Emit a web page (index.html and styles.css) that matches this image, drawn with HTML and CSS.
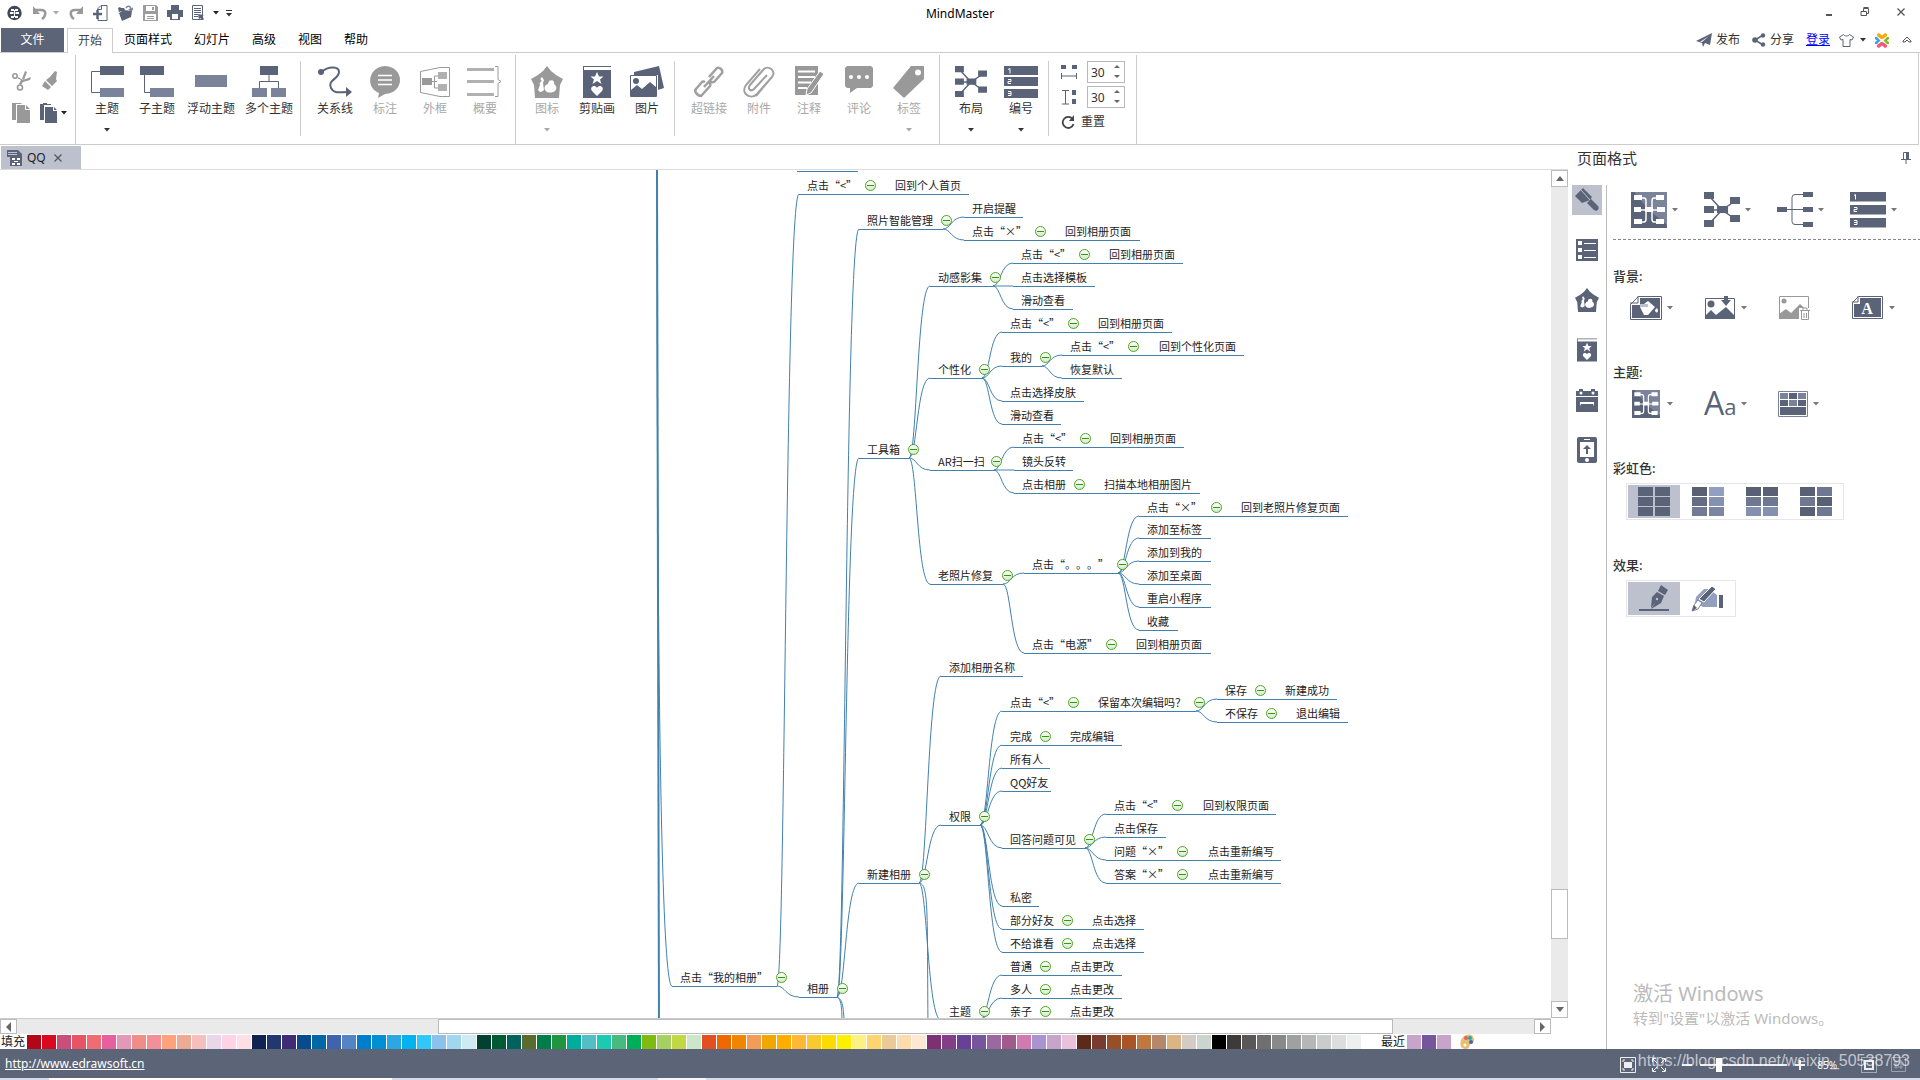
FILE: index.html
```
<!DOCTYPE html>
<html lang="zh-CN">

<head>
    <meta charset="utf-8" />
    <title>MindMaster</title>
    <link rel="stylesheet" href="styles.css">
</head>

<body>
    <!-- shared symbols -->
    <svg class="defs" aria-hidden="true">
        <symbol id="i-arrow" viewBox="0 0 6 4"><path d="M0 0h6L3 3.5z" fill="currentColor" /></symbol>
        <symbol id="i-pentagon" viewBox="0 0 32 32">
            <path d="M16 0l4 5 5 4 7 4-3 6-1 13H4L3 19 0 13l7-4 5-4z" fill="currentColor" />
            <path d="M11 11c-2 1-2 3 0 4-2 1-3 2-2 4l-2 5c2 3 4 2 6 0l-1-7 1-3z" fill="#fff" />
            <path d="M18 15c3-2 6 0 5 3 3 2 3 5 1 7-3 2-8 2-9 0-3-3-1-6 2-7z" fill="#fff" />
        </symbol>
        <symbol id="i-clip" viewBox="0 0 28 32">
            <path d="M0 0h28v1H1v3h27v28H0z" fill="currentColor" />
            <path d="M14 6l2 4.500h4.500l-3.500 3 1.500 4.500-4.500-3-4.500 3 1.500-4.500-3.500-3H12zM14 30l-5-5c-3-4 3-7 5-3 2-4 8-1 5 3z" fill="#fff" />
        </symbol>
        <symbol id="i-layout" viewBox="0 0 36 36">
            <path d="M5 4l13 14L31 9M5 18h13M5 32l13-14 13 9" fill="none" stroke="currentColor" stroke-width="1.500" />
            <path d="M0 0h10v7H0zM0 14h10v7H0zM0 28h10v7H0zM13 14h11v7H13zM26 5h10v7H26zM26 23h10v7H26z" fill="currentColor" />
        </symbol>
        <symbol id="i-number" viewBox="0 0 36 36">
            <path d="M0 0h36v9.500H0zM0 13h36v9.500H0zM0 26h36v9.500H0z" fill="currentColor" />
            <path d="M4 3.500l1.500-1v5M4 15.500h3v2H4v2h3M4 28.500h3v4H4M4 30.500h3" fill="none" stroke="#fff" stroke-width="1" />
        </symbol>
        <symbol id="i-theme" viewBox="0 0 36 36">
            <path d="M0 0h36v36H0z" fill="#5a6377" />
            <path d="M3 0h33v33L18 18z" fill="#7b839b" />
            <path d="M10 6h3q2 0 2 3v18q0 3-2 3h-3M26 6h-3q-2 0-2 3v18q0 3 2 3h3M8 18h20" fill="none" stroke="#fff" stroke-width="1.500" />
            <path d="M3 3h8v5H3zM3 15h7v5H3zM3 27h8v5H3zM25 3h8v5h-8zM26 15h8v5h-8zM25 27h8v5h-8zM14 15h8v5h-8z" fill="#fff" />
        </symbol>
    </svg>

    <header class="titlebar">
        <div class="quick">
            <svg class="q-logo" width="15" height="16" viewBox="0 0 15 16"><circle cx="7.500" cy="8" r="7.200" fill="#3f475a" /><path d="M4 4h3v2H4zM8 4h3v2H8zM3 7h3v2H3zM9 7h3v2H9zM4 11h3v2H4zM8 11h3v2H8z" fill="#fff" /><path d="M7.500 5v7M6 8h3" stroke="#fff" fill="none" /></svg>
            <button class="q-btn q-undo" aria-label="撤销"><svg width="14" height="14" viewBox="0 0 14 14"><path d="M2 4h6c6 0 5 6 1 9" fill="none" stroke="#999" stroke-width="2.500" /><path d="M0 0v8h7z" fill="#999" /></svg></button>
            <button class="q-btn q-mini light" aria-label="撤销列表"><svg width="6" height="4"><use href="#i-arrow" /></svg></button>
            <button class="q-btn q-redo" aria-label="重做"><svg width="14" height="14" viewBox="0 0 14 14"><path d="M12 4H6C0 4 1 10 5 13" fill="none" stroke="#999" stroke-width="2.500" /><path d="M14 0v8H7z" fill="#999" /></svg></button>
            <button class="q-btn" aria-label="新建"><svg width="15" height="16" viewBox="0 0 15 16"><path d="M4.500 6V4l3.500-3.500h6v15h-9V13M8.500 1v3.500H5" fill="none" stroke="#5a6377" /><path d="M0 9h9M4.500 5v9" stroke="#5a6377" stroke-width="2.500" /></svg></button>
            <button class="q-btn" aria-label="打开"><svg width="15" height="16" viewBox="0 0 15 16"><path d="M0 3l2-1 1 1h3l1 2-6 2zM1 8l5-3 8 1-1 6-9 4z" fill="#5a6377" /><path d="M8 3c2-3 5-2 5 2M11 4l2 2 2-3" fill="none" stroke="#7b839b" stroke-width="1.500" /></svg></button>
            <button class="q-btn" aria-label="保存"><svg width="15" height="16" viewBox="0 0 15 16"><path d="M0 0h13l2 2v14H0z" fill="#9c9c9c" /><path d="M3 1h9v5H3zM2 9h11v6H2z" fill="#fff" /><path d="M9 2h2v3H9zM4 11h7v1H4zM4 13h7v1H4z" fill="#9c9c9c" /></svg></button>
            <button class="q-btn" aria-label="打印"><svg width="16" height="16" viewBox="0 0 16 16"><path d="M4 0h8v5h4v7h-3v3H3v-3H0V5h4z" fill="#5a6377" /><path d="M5 9h6v5H5z" fill="#fff" /></svg></button>
            <button class="q-btn q-page" aria-label="导出"><svg width="12" height="16" viewBox="0 0 12 16"><path d="M.5.500h10v14H.5zM2 3.500h7M2 5.500h7M2 7.500h7M2 9.500h4M2 11.500h4" fill="none" stroke="#5a6377" /><path d="M6 9l6 1-2 1 2 3-1 1-3-2-1 2z" fill="#5a6377" /></svg></button>
            <button class="q-btn q-mini" aria-label="导出列表"><svg width="6" height="4"><use href="#i-arrow" /></svg></button>
            <button class="q-btn q-mini q-more" aria-label="自定义"><svg width="6" height="7" viewBox="0 0 6 7"><path d="M0 0h6v1H0zM0 3h6L3 6.500z" fill="#333" /></svg></button>
        </div>
        <h1 class="app-title">MindMaster</h1>
        <div class="win-ctl">
            <button aria-label="最小化"><svg width="10" height="12"><path d="M2 8h6v2H2z" fill="#555" /></svg></button>
            <button aria-label="还原"><svg width="10" height="12" viewBox="0 0 10 12"><path d="M3.500 5V2.500h5v5H7M3.500 1.500h5" fill="none" stroke="#555" /><path d="M1 5.500h5.500v4H1z" fill="none" stroke="#555" /></svg></button>
            <button aria-label="关闭"><svg width="10" height="12"><path d="M1.500 2.500l7 7M8.500 2.500l-7 7" stroke="#555" stroke-width="1.300" /></svg></button>
        </div>
    </header>

    <nav class="tabs">
        <button class="tab-file">文件</button>
        <button class="tab active">开始</button>
        <button class="tab">页面样式</button>
        <button class="tab">幻灯片</button>
        <button class="tab">高级</button>
        <button class="tab">视图</button>
        <button class="tab">帮助</button>
        <div class="account">
            <button class="acc-btn"><svg width="16" height="14" viewBox="0 0 16 14"><path d="M0 8L16 0l-2 12-5-2-2 4-1-4zM6 9l7-6-9 6z" fill="#5a6377" /></svg>发布</button>
            <button class="acc-btn"><svg width="14" height="14" viewBox="0 0 14 14"><path d="M11 2L3 7l8 5" fill="none" stroke="#5a6377" stroke-width="1.500" /><circle cx="11" cy="2.500" r="2.200" fill="#5a6377" /><circle cx="3" cy="7" r="2.800" fill="#5a6377" /><circle cx="11" cy="11.500" r="2.200" fill="#5a6377" /></svg>分享</button>
            <a class="login" href="#">登录</a>
            <button class="acc-icon skin" aria-label="皮肤"><svg width="15" height="13" viewBox="0 0 15 13"><path d="M4.500.500c1 2 5 2 6 0l4 2.500-1.500 3-2-.5v7H4v-7L2 6 .5 3z" fill="none" stroke="#5a6377" /></svg><svg width="6" height="4"><use href="#i-arrow" /></svg></button>
            <svg class="flower" width="16" height="15" viewBox="0 0 16 15"><path d="M3 3V1l2-1 3 2.500L11 0l2 1v2L9 6H7z" fill="#f8a912" /><path d="M13 4h2v2l-2 1.500L15 9v2h-2L9.500 7.500z" fill="#85bb24" /><path d="M3 12v2l2 1 3-2.500L11 15l2-1v-2L9 9H7z" fill="#f4587c" /><path d="M3 4H1v2l2 1.500L1 9v2h2l3.500-3.500z" fill="#3ba4df" /></svg>
            <button class="acc-icon" aria-label="折叠功能区"><svg width="10" height="8" viewBox="0 0 10 8"><path d="M1 5l4-4 4 4v1H7L5 4 3 6H1z" fill="none" stroke="#555" /></svg></button>
        </div>
    </nav>

    <section class="ribbon">
        <div class="group clipboard">
            <button class="mini" aria-label="剪切"><svg width="20" height="20" viewBox="0 0 20 20"><path d="M6 6l5 3 8-3-1 3-7 2-2 3-2-1 2-4-4-2zM10 8l3-8 2 1-3 8z" fill="#999" /><circle cx="3" cy="5" r="2.200" fill="none" stroke="#999" stroke-width="1.600" /><circle cx="8" cy="16.500" r="2.500" fill="none" stroke="#999" stroke-width="1.600" /></svg></button>
            <button class="mini" aria-label="格式刷"><svg width="16" height="20" viewBox="0 0 16 20"><path d="M13 0l2 1-1 7 1 2-5 5-6-6 4-3zM3 10l6 6-3 3-6-4z" fill="#999" /></svg></button>
            <button class="mini" aria-label="复制"><svg width="18" height="20" viewBox="0 0 18 20"><path d="M0 0h9l1 1H4v16H0zM5 2h8v5h5v13H5zM14 2l4 4h-4z" fill="#999" /></svg></button>
            <button class="mini paste" aria-label="粘贴"><svg width="18" height="20" viewBox="0 0 18 20"><path d="M0 1h3V0h4v1h4v1H4v15H0zM5 4h8v4h4v12H5zM14 4l3 3h-3z" fill="#5a6377" /></svg><svg width="6" height="4"><use href="#i-arrow" /></svg></button>
        </div>

        <div class="group">
            <button class="tool"><svg width="34" height="32" viewBox="0 0 34 32"><path d="M10 5.500H1.500v21H10" fill="none" stroke="#5a6377" /><path d="M10 0h24v9H10z" fill="#5a6377" /><path d="M10 22h24v9H10z" fill="#7b839b" /></svg>主题<svg class="drop" width="6" height="4"><use href="#i-arrow" /></svg></button>
            <button class="tool"><svg width="34" height="32" viewBox="0 0 34 32"><path d="M4.500 9v17.500H10" fill="none" stroke="#5a6377" /><path d="M0 0h24v9H0z" fill="#5a6377" /><path d="M10 22h24v9H10z" fill="#7b839b" /></svg>子主题</button>
            <button class="tool wide"><svg width="34" height="32" viewBox="0 0 34 32"><path d="M1 9h32v12H1z" fill="#7b839b" /></svg>浮动主题</button>
            <button class="tool wide"><svg width="34" height="32" viewBox="0 0 34 32"><path d="M17 9v7M7.500 22v-6.500h19V22" fill="none" stroke="#5a6377" /><path d="M8 0h18v9H8z" fill="#5a6377" /><path d="M0 22h15v9H0zM19 22h15v9H19z" fill="#7b839b" /></svg>多个主题</button>
            <i class="sep"></i>
            <button class="tool"><svg width="34" height="32" viewBox="0 0 34 32"><circle cx="3" cy="6" r="3" fill="#5a6377" /><path d="M3 6C12-1 21 1 21 6c0 7-12 8-8 16 3 6 8 4 17 4" fill="none" stroke="#5a6377" stroke-width="2" /><path d="M28 21l6 5-6 5z" fill="#5a6377" /></svg>关系线</button>
            <button class="tool off"><svg width="30" height="32" viewBox="0 0 30 32"><path d="M15 0c20 1 20 27 0 28l-7 4 1-5C-5 22-2 1 15 0z" fill="#999" /><path d="M8 9.500h14M8 14h14M8 18.500h14" stroke="#fff" stroke-width="1.500" /></svg>标注</button>
            <button class="tool off"><svg width="30" height="32" viewBox="0 0 30 32"><path d="M.5 5.500L20 1.500h9.500v29H20L.5 26.500zM12 15.500h5M18 10h-3.500v12H18" fill="none" stroke="#999" /><path d="M2 12h10v7H2z" fill="#999" /><path d="M18 6h9v7h-9zM18 18h9v7h-9z" fill="#b0b0b0" /></svg>外框</button>
            <button class="tool off"><svg width="36" height="32" viewBox="0 0 36 32"><path d="M0 2h27v3H0zM0 14h27v3H0zM0 27h27v3H0z" fill="#b0b0b0" /><path d="M28 .5h3v13l3 2-3 2v13h-3" fill="none" stroke="#999" /></svg>概要</button>
        </div>

        <div class="group">
            <button class="tool off"><svg class="gray" width="32" height="32"><use href="#i-pentagon" /></svg>图标<svg class="drop" width="6" height="4"><use href="#i-arrow" /></svg></button>
            <button class="tool"><svg class="ink" width="28" height="32"><use href="#i-clip" /></svg>剪贴画</button>
            <button class="tool"><svg width="34" height="32" viewBox="0 0 34 32"><path d="M4 6L29 0l5 22-6 2V9H4z" fill="#5a6377" /><path d="M.5 9.500h26v21H.5z" fill="#fff" stroke="#5a6377" /><path d="M1 24l6-5 5 4 8-7 6 5v10H1z" fill="#5a6377" /><circle cx="6" cy="15" r="3" fill="#5a6377" /></svg>图片</button>
            <i class="sep"></i>
            <button class="tool off"><svg width="30" height="32" viewBox="0 0 30 32"><g fill="none" stroke="#a0a0a0" stroke-width="2.500"><path d="M15 11L23 2q2-1 4 1t1 4l-8 9q-2 1-4-1M11 16q-2-1-3 0l-6 7q-2 2 1 5t5 1l8-9q1-2-1-4M10 21l10-11" /></g></svg>超链接</button>
            <button class="tool off"><svg width="32" height="32" viewBox="0 0 32 32"><path d="M24 9L11 23c-3 3-7 0-4-4L20 4c5-6 14 1 9 7L14 28c-6 6-17 0-11-9L17 3M28 12L13 30" fill="none" stroke="#a0a0a0" stroke-width="2" /></svg>附件</button>
            <button class="tool off"><svg width="28" height="32" viewBox="0 0 28 32"><path d="M0 0h23v29H0z" fill="#999" /><path d="M3 5.500h17M3 11h17M3 16.500h13M3 22h9" stroke="#fff" stroke-width="2" /><path d="M25 5l4 3-13 19-5 2 1-6z" fill="#999" stroke="#fff" /></svg>注释</button>
            <button class="tool off"><svg width="28" height="32" viewBox="0 0 28 32"><path d="M2 0h24l2 2v18l-2 2H12l-7 5v-5H2l-2-2V2z" fill="#999" /><circle cx="6" cy="11" r="2" fill="#fff" /><circle cx="14" cy="11" r="2" fill="#fff" /><circle cx="22" cy="11" r="2" fill="#fff" /></svg>评论</button>
            <button class="tool off"><svg width="32" height="32" viewBox="0 0 32 32"><path d="M18 0h13v13L11 32 0 22z" fill="#999" /><circle cx="25" cy="6.500" r="3" fill="#fff" /></svg>标签<svg class="drop" width="6" height="4"><use href="#i-arrow" /></svg></button>
        </div>

        <div class="group">
            <button class="tool"><svg class="ink" width="32" height="32"><use href="#i-layout" /></svg>布局<svg class="drop" width="6" height="4"><use href="#i-arrow" /></svg></button>
            <button class="tool"><svg class="ink" width="34" height="32" viewBox="0 0 34 32"><path d="M0 0h34v9H0zM0 11h34v9H0zM0 23h34v9H0z" fill="currentColor" /><path d="M4 3.500l2-1v5M4 13.500h3v2H4v2h3M4 25.500h3v4H4M4 27.500h3" fill="none" stroke="#fff" /></svg>编号<svg class="drop" width="6" height="4"><use href="#i-arrow" /></svg></button>
            <i class="sep"></i>
            <div class="spacing">
                <label class="spin">
                    <svg width="16" height="15" viewBox="0 0 16 15"><path d="M0 0h5v4H0zM11 0h5v4h-5z" fill="#5a6377" /><path d="M.5 8v6M15.500 8v6M1 11h14" fill="none" stroke="#5a6377" /></svg>
                    <span class="spin-box"><input type="text" value="30" aria-label="水平间距"><svg width="6" height="14" viewBox="0 0 6 14"><path d="M0 3l3-3 3 3zM0 10h6l-3 3z" fill="#666" /></svg></span>
                </label>
                <label class="spin">
                    <svg width="16" height="15" viewBox="0 0 16 15"><path d="M11 0h4v5h-4zM11 9h4v5h-4z" fill="#5a6377" /><path d="M1 .5h7M1 14h7M4.500 1v13" fill="none" stroke="#5a6377" /></svg>
                    <span class="spin-box"><input type="text" value="30" aria-label="垂直间距"><svg width="6" height="14" viewBox="0 0 6 14"><path d="M0 3l3-3 3 3zM0 10h6l-3 3z" fill="#666" /></svg></span>
                </label>
                <button class="reset"><svg width="14" height="14" viewBox="0 0 14 14"><path d="M11.500 4A5.500 5.500 0 1 0 12.500 9" fill="none" stroke="#444" stroke-width="1.800" /><path d="M13 0v6H8z" fill="#444" /></svg>重置</button>
            </div>
        </div>
    </section>

    <main class="work">
        <div class="editor">
            <div class="doc-tabs">
                <div class="doc-tab">
                    <svg width="16" height="16" viewBox="0 0 16 16"><path d="M0 0h11l4 4v12H3V7H0z" fill="#5a6377" /><path d="M1 2.500h9M1 4.500h9" stroke="#bcc1cd" /><path d="M5 8h3v2H5zM10 8h3v2h-3zM7 11h4v1H7zM5 13h3v2H5zM10 13h3v2h-3z" fill="#fff" /></svg>
                    <span>QQ</span>
                    <button aria-label="关闭文档"><svg width="8" height="8"><path d="M.5.500l7 7M7.500.500l-7 7" stroke="#555" stroke-width="1.200" /></svg></button>
                </div>
            </div>
            <div class="view">
                <div class="canvas" id="map"></div>
                <div class="vscroll">
                    <button aria-label="向上"><svg width="8" height="5"><path d="M0 5h8L4 0z" fill="#666" /></svg></button>
                    <span class="v-before"></span><span class="thumb"></span><span class="v-after"></span>
                    <button aria-label="向下"><svg width="8" height="5"><path d="M0 0h8L4 5z" fill="#666" /></svg></button>
                </div>
            </div>
            <div class="hscroll">
                <button aria-label="向左"><svg width="5" height="10"><path d="M5 0v10L0 5z" fill="#666" /></svg></button>
                <span class="h-before"></span><span class="thumb"></span><span class="h-after"></span>
                <button aria-label="向右"><svg width="5" height="10"><path d="M0 0v10l5-5z" fill="#666" /></svg></button>
            </div>
            <div class="palette">
                <span>填充</span>
                <div class="swatches" id="fill"></div>
                <span class="recent">最近</span>
                <div class="swatches" id="recent"></div>
                <button class="more-colors" aria-label="更多颜色"><svg width="14" height="15" viewBox="0 0 14 15"><path d="M6 1c9-3 10 8 5 9-2 0-1 5-5 5-8 0-7-11 0-14z" fill="#e9bd72" /><circle cx="6" cy="4" r="2" fill="#e8615c" /><circle cx="10" cy="4" r="2" fill="#27a6b5" /><circle cx="11" cy="8" r="2" fill="#3b67b8" /><circle cx="5" cy="11" r="1.500" fill="#fff" /></svg></button>
            </div>
        </div>

        <aside class="panel">
            <div class="panel-head">
                <h2>页面格式</h2>
                <button aria-label="固定"><svg width="10" height="12" viewBox="0 0 10 12"><path d="M2.500.500h5v7h-5zM0 7.500h10M5 8v4" fill="none" stroke="#5a6377" /><path d="M5 0h3v7H5z" fill="#5a6377" /></svg></button>
            </div>
            <div class="panel-main">
                <div class="rail">
                    <button class="on" aria-label="页面格式"><svg width="24" height="24" viewBox="0 0 24 24"><path d="M8 0l9 9-2 3-8 3-7-7zM16 11l7 7c2 3-1 6-4 4l-7-7z" fill="#5a6377" /><path d="M6 2l9 10" stroke="#bcc1cd" /></svg></button>
                    <button aria-label="大纲"><svg width="22" height="22" viewBox="0 0 22 22"><path d="M0 0h22v22H0z" fill="#5a6377" /><path d="M2 2h4v4H2zM2 9h4v4H2zM2 16h4v4H2zM8 4h12v1H8zM8 11h12v1H8zM8 18h12v1H8z" fill="#fff" /></svg></button>
                    <button aria-label="图标"><svg class="ink" width="24" height="24"><use href="#i-pentagon" /></svg></button>
                    <button aria-label="剪贴画"><svg class="ink" width="20" height="24" viewBox="0 0 20 24"><use href="#i-clip" width="20" height="24" /></svg></button>
                    <button aria-label="任务"><svg width="22" height="24" viewBox="0 0 22 24"><path d="M0 3h3V1h4v2h8V1h4v2h3v5H0zM0 9h22v15H0z" fill="#5a6377" /><circle cx="5" cy="5" r="1.500" fill="#fff" /><circle cx="17" cy="5" r="1.500" fill="#fff" /><path d="M4 14h14v4l-1-2H5l-1 2z" fill="#fff" /></svg></button>
                    <button aria-label="手机"><svg width="20" height="26" viewBox="0 0 20 26"><rect width="20" height="26" rx="2" fill="#5a6377" /><path d="M7 2h6v1H7zM3 5h14v15H3z" fill="#fff" /><circle cx="10" cy="23" r="2" fill="#fff" /><path d="M10 8l4 4h-3v5H9v-5H6z" fill="#5a6377" /></svg></button>
                </div>
                <div class="props">
                    <div class="row row-main">
                        <button class="pick"><svg width="36" height="36"><use href="#i-theme" /></svg><svg width="6" height="4"><use href="#i-arrow" /></svg></button>
                        <button class="pick"><svg class="ink" width="36" height="36"><use href="#i-layout" /></svg><svg width="6" height="4"><use href="#i-arrow" /></svg></button>
                        <button class="pick"><svg width="36" height="36" viewBox="0 0 36 36"><path d="M0 17.500h36M27 2.500H18q-3 0-3 3v24q0 3 3 3h9" fill="none" stroke="#5a6377" /><path d="M0 15h10v5H0zM26 0h10v5H26zM26 15h10v5H26zM26 30h10v5H26z" fill="#5a6377" /></svg><svg width="6" height="4"><use href="#i-arrow" /></svg></button>
                        <button class="pick"><svg class="ink" width="36" height="36"><use href="#i-number" /></svg><svg width="6" height="4"><use href="#i-arrow" /></svg></button>
                    </div>

                    <h3>背景:</h3>
                    <div class="row">
                        <button class="pick"><svg width="32" height="24" viewBox="0 0 32 24"><path d="M8.500.500h23v23H.5v-15zM8 0v7H0" fill="#fff" stroke="#5a6377" /><path d="M10 2h20v20H2V9h8z" fill="#5a6377" /><path d="M10 11l8-6 7 6-7 8h-4zM27 12c3 5-2 6-2 2z" fill="#fff" /><path d="M10 8h8v3h-8z" fill="#bcc1cd" /></svg><svg width="6" height="4"><use href="#i-arrow" /></svg></button>
                        <button class="pick"><svg width="32" height="24" viewBox="0 0 32 24"><path d="M1.500 2.500h29v20h-29z" fill="#fff" stroke="#5a6377" /><circle cx="7" cy="8" r="3.500" fill="#5a6377" /><path d="M1 20l6-6 5 5 10-8 9 9v3H1zM20 0h4v4h3l-5 6-5-6h3z" fill="#5a6377" /></svg><svg width="6" height="4"><use href="#i-arrow" /></svg></button>
                        <button class="pick"><svg width="32" height="24" viewBox="0 0 32 24"><path d="M1.500.500h29v22h-29z" fill="#fff" stroke="#999" /><circle cx="6" cy="5" r="2.500" fill="#999" /><path d="M1 18l7-5 5 4 9-9 9 8v7H1z" fill="#999" /><path d="M21 12h11v12H21z" fill="#fff" /><path d="M22 14.500h10M25 14v-2h4v2M23.500 15v8.500h7V15M26 17v5M28.500 17v5" fill="none" stroke="#999" /></svg></button>
                        <button class="pick"><svg width="32" height="24" viewBox="0 0 32 24"><path d="M6.500.500h24v22H.5v-16zM6 0v6H0" fill="#fff" stroke="#5a6377" /><path d="M8 2h21v19H2V8h6z" fill="#5a6377" /><text class="icon-a" x="15" y="18">A</text></svg><svg width="6" height="4"><use href="#i-arrow" /></svg></button>
                    </div>

                    <h3>主题:</h3>
                    <div class="row">
                        <button class="pick"><svg width="32" height="28" viewBox="0 0 36 36"><use href="#i-theme" /></svg><svg width="6" height="4"><use href="#i-arrow" /></svg></button>
                        <button class="pick"><span class="font-aa"><b>A</b>a</span><svg width="6" height="4"><use href="#i-arrow" /></svg></button>
                        <button class="pick"><svg width="30" height="26" viewBox="0 0 30 26"><path d="M.5.500h29v25H.5z" fill="#fff" stroke="#7b839b" /><path d="M2 2h8v6H2zM20 2h8v6h-8zM11 9h8v6h-8z" fill="#7b839b" /><path d="M11 2h8v6h-8zM2 9h8v6H2zM20 9h8v6h-8zM2 16h26v8H2z" fill="#5a6377" /></svg><svg width="6" height="4"><use href="#i-arrow" /></svg></button>
                    </div>

                    <h3>彩虹色:</h3>
                    <div class="choice">
                        <button class="on" aria-label="单色"><svg width="32" height="30"><path d="M0 0h15v9H0zM17 0h15v9H17zM0 10h15v9H0zM17 10h15v9H17zM0 20h15v9H0zM17 20h15v9H17z" fill="#5a6377" /></svg></button>
                        <button aria-label="彩虹1"><svg width="32" height="30"><path d="M0 0h15v9H0z" fill="#5a6074" /><path d="M0 10h15v9H0z" fill="#656d84" /><path d="M0 20h15v9H0z" fill="#727b95" /><path d="M17 0h15v9H17z" fill="#919fc0" /><path d="M17 10h15v9H17z" fill="#8591b1" /><path d="M17 20h15v9H17z" fill="#7c86a3" /></svg></button>
                        <button aria-label="彩虹2"><svg width="32" height="30"><path d="M0 0h15v9H0zM17 0h15v9H17z" fill="#5a6074" /><path d="M0 10h15v9H0zM17 10h15v9H17z" fill="#6f7892" /><path d="M0 20h15v9H0zM17 20h15v9H17z" fill="#8591b1" /></svg></button>
                        <button aria-label="彩虹3"><svg width="32" height="30"><path d="M0 0h15v9H0zM17 10h15v9H17zM0 20h15v9H0z" fill="#5a6074" /><path d="M17 0h15v9H17zM0 10h15v9H0zM17 20h15v9H17z" fill="#6f7892" /></svg></button>
                    </div>

                    <h3>效果:</h3>
                    <div class="choice">
                        <button class="on" aria-label="普通线条"><svg width="32" height="28" viewBox="0 0 32 28"><path d="M1 24h30v2H1z" fill="#5a6377" /><path d="M23 0l7 5-3 5-7-4zM19 7l7 4-3 7-10 6 5-7-5 6 1-11z" fill="#5a6377" /><circle cx="19" cy="14" r="1.200" fill="#bcc1cd" /></svg></button>
                        <button aria-label="手绘线条"><svg width="34" height="28" viewBox="0 0 34 28"><path d="M5 12l8-8h5l8 6v12H12l-8-4z" fill="#949fbf" /><path d="M28 10h4v13h-4z" fill="#5a6377" /><path d="M21 1l4 3-12 13-5-3z" fill="#5a6377" stroke="#fff" /><path d="M7 15l4 3-4 6-6 2 2-6z" fill="#fff" stroke="#7b839b" /><path d="M3 20l3 3-5 3z" fill="#5a6377" /></svg></button>
                    </div>

                    <div class="activate">
                        <p class="act-title">激活 Windows</p>
                        <p>转到"设置"以激活 Windows。</p>
                    </div>
                </div>
            </div>
        </aside>
    </main>

    <footer class="status">
        <a href="#">http://www.edrawsoft.cn</a>
        <div class="zoom">
            <button aria-label="全屏"><svg width="16" height="16" viewBox="0 0 16 16"><path d="M.5.500h15v15H.5z" fill="none" stroke="#eee" /><path d="M3 5V3h2M11 3h2v2M13 11v2h-2M5 13H3v-2" fill="none" stroke="#eee" /><path d="M4 5h8v6H4z" fill="#eee" /></svg></button>
            <button class="z-fit" aria-label="适合窗口"><svg width="14" height="14" viewBox="0 0 14 14"><path d="M.5 4V.5H4M10 .5h3.500V4M13.500 10v3.500H10M4 13.500H.5V10M1 1l4 4M13 1L9 5M13 13L9 9M1 13l4-4" fill="none" stroke="#eee" /></svg></button>
            <button aria-label="缩小"><svg width="10" height="10"><path d="M0 5h10" stroke="#eee" stroke-width="2" /></svg></button>
            <input type="range" min="0" max="100" value="20" aria-label="缩放">
            <button aria-label="放大"><svg width="10" height="10"><path d="M0 5h10M5 0v10" stroke="#eee" stroke-width="2" /></svg></button>
            <span class="pct">85%</span>
            <button aria-label="适合页面"><svg width="16" height="16" viewBox="0 0 16 16"><path d="M.5.500h15v15H.5z" fill="none" stroke="#eee" stroke-dasharray="1 1" /><path d="M4 4h8v8H4z" fill="none" stroke="#eee" stroke-width="2" /></svg></button>
            <button class="z-last" aria-label="全图"><svg width="15" height="15" viewBox="0 0 15 15"><path d="M.5.500h14v14H.5zM3 5h9M3 10h9M5 3v9M10 3v9" fill="none" stroke="#9aa1af" /></svg></button>
        </div>
        <span class="mark">https://blog.csdn.net/weixin_50538793</span>
    </footer>
    <div class="taskbar"><span class="t1"></span><span class="t2"></span></div>

    <script src="script.js"></script>
</body>

</html>
```
FILE: styles.css
```
* {
    box-sizing: border-box;
}

body {
    margin: 0;
    height: 100vh;
    display: flex;
    flex-direction: column;
    overflow: hidden;
    background: #fff;
    color: #222;
    font: 12px/16px "Noto Sans", "Noto Sans CJK SC", sans-serif;
}

button {
    border: 0;
    padding: 0;
    margin: 0;
    background: none;
    color: inherit;
    font: inherit;
    cursor: pointer;
    display: flex;
    align-items: center;
    justify-content: center;
    white-space: nowrap;
}

svg {
    display: block;
    flex: none;
}

h1, h2, h3, p {
    margin: 0;
    font-weight: normal;
}

.defs {
    position: absolute;
    width: 0;
    height: 0;
}

.ink {
    color: #5a6377;
}

.gray {
    color: #999;
}

/* title bar */
.titlebar {
    display: grid;
    grid-template-columns: 1fr auto 1fr;
    align-items: center;
    height: 28px;
    flex: none;
}

.quick {
    display: flex;
    align-items: center;
    gap: 9px;
    padding-left: 7px;
    margin-top: -2px;
}

.q-btn {
    min-width: 16px;
    height: 16px;
}

.q-undo {
    margin-left: 1px;
}

.q-mini {
    min-width: 6px;
}

.q-redo {
    margin-right: -1px;
}

.q-page {
    min-width: 12px;
}

.q-mini.light {
    color: #aaa;
    margin-left: -4px;
}

.q-more {
    margin-left: -2px;
}

.app-title {
    font-size: 12px;
    color: #000;
}

.win-ctl {
    display: flex;
    justify-content: flex-end;
    gap: 26px;
    padding-right: 14px;
    margin-top: -4px;
}

/* menu tabs */
.tabs {
    display: flex;
    align-items: stretch;
    height: 25px;
    flex: none;
    border-bottom: 1px solid #ccc;
    color: #000;
}

.tab-file {
    width: 63px;
    margin: 0 3px 0 1px;
    background: #5c6478;
    color: #fff;
}

.tab {
    padding: 0 11px;
}

.tab.active {
    color: #444;
    padding: 0 10px;
    background: #fff;
    border: 1px solid #ccc;
    border-bottom: 0;
    margin-bottom: -1px;
}

.account {
    margin-left: auto;
    display: flex;
    align-items: center;
    gap: 12px;
    padding-right: 8px;
    color: #333;
}

.acc-btn {
    gap: 4px;
}

.acc-icon {
    gap: 6px;
}

.login {
    color: #00f;
}

.skin {
    margin: 0 -4px 0 -3px;
}

/* ribbon */
.ribbon {
    display: flex;
    height: 92px;
    flex: none;
    border-bottom: 1px solid #ccc;
    margin-right: 1px;
    border-right: 1px solid #ccc;
}

.group {
    display: flex;
    padding: 8px 5px 0 6px;
    margin-top: 2px;
    border-right: 1px solid #ccc;
}

.clipboard {
    width: 76px;
    display: grid;
    grid-template-columns: 28px 30px;
    grid-template-rows: 32px 32px;
    padding: 10px 0 0 11px;
}

.mini {
    justify-content: flex-start;
    padding-left: 1px;
    gap: 3px;
}

.mini:nth-child(2) {
    padding-left: 3px;
}

.tool {
    width: 50px;
    height: 76px;
    padding-top: 3px;
    flex-direction: column;
    justify-content: flex-start;
    color: #333;
}

.tool > svg:first-child {
    margin-bottom: 3px;
}

.wide {
    width: 58px;
}

.off {
    color: #a8a8a8;
}

.drop {
    margin-top: 11px;
}

.sep {
    width: 1px;
    height: 75px;
    margin: -2px 9px 0 2px;
    background: #ccc;
}

.spacing {
    display: flex;
    flex-direction: column;
    gap: 3px;
    margin-top: -2px;
    padding-left: 3px;
    padding-right: 6px;
}

.spin {
    display: flex;
    align-items: center;
    gap: 10px;
}

.spin-box {
    display: flex;
    align-items: center;
    width: 38px;
    height: 22px;
    border: 1px solid #b8b8b8;
}

.spin-box input {
    width: 26px;
    height: 20px;
    border: 0;
    padding: 0 0 0 3px;
    font: inherit;
    color: #333;
    background: none;
}

.reset {
    justify-content: flex-start;
    gap: 6px;
    height: 22px;
    color: #333;
}

/* work area */
.work {
    flex: 1;
    min-height: 0;
    display: flex;
}

.editor {
    flex: 1;
    min-width: 0;
    display: flex;
    flex-direction: column;
}

.doc-tabs {
    height: 25px;
    padding-top: 1px;
    flex: none;
    border-bottom: 1px solid #ddd;
}

.doc-tab {
    display: flex;
    align-items: center;
    gap: 4px;
    width: 80px;
    height: 23px;
    margin-left: 1px;
    padding-left: 6px;
    background: #bcc1cd;
    font-size: 12px;
}

.doc-tab button {
    margin-left: 4px;
}

.view {
    flex: 1;
    min-height: 0;
    display: flex;
}

.canvas {
    flex: 1;
    position: relative;
    overflow: hidden;
    font: 11px/16px "Noto Sans CJK SC", sans-serif;
    text-spacing-trim: space-all;
    color: #222;
}

.map-lines {
    position: absolute;
    left: 0;
    top: 0;
    width: 100%;
    height: 100%;
    fill: none;
    stroke: #4081ae;
    stroke-width: 1;
}

.map-lines .flat {
    shape-rendering: crispEdges;
}

.map-lines .trunk {
    stroke-width: 2;
}

.topic {
    position: absolute;
    white-space: nowrap;
}

.toggle {
    position: absolute;
    width: 11px;
    height: 11px;
    border: 1px solid #4ea51e;
    border-radius: 50%;
    background: linear-gradient(#fff, #d3ecd0);
}

.toggle::before {
    content: "";
    width: 7px;
    height: 1px;
    background: #3a9410;
}

.vscroll,
.hscroll {
    display: flex;
    background: #eaeaea;
    flex: none;
}

.vscroll {
    width: 17px;
    flex-direction: column;
}

.hscroll {
    height: 16px;
    margin-right: 17px;
    border-top: 1px solid #ccc;
}

.vscroll button,
.hscroll button {
    width: 17px;
    height: 17px;
    flex: none;
    border: 1px solid #bbb;
    background: #fff;
}

.hscroll button {
    height: 15px;
}

.thumb {
    background: #fff;
    border: 1px solid #bbb;
}

.v-before {
    flex: 704;
}

.vscroll .thumb {
    flex: 48;
}

.v-after {
    flex: 62;
}

.h-before {
    flex: 422;
}

.hscroll .thumb {
    flex: 954;
}

.h-after {
    flex: 141;
}

/* colour strip */
.palette {
    display: flex;
    align-items: center;
    height: 15px;
    flex: none;
    padding-left: 1px;
}

.swatches {
    display: flex;
    gap: 1px;
    margin-left: 2px;
}

.swatches button {
    width: 14px;
    height: 14px;
}

.recent {
    margin-left: 20px;
}

.more-colors {
    margin-left: 9px;
}

/* format panel */
.panel {
    width: 352px;
    flex: none;
    display: flex;
    flex-direction: column;
}

.panel-head {
    display: flex;
    align-items: center;
    justify-content: space-between;
    height: 28px;
    padding: 0 9px 2px;
}

.panel-head h2 {
    font-size: 15px;
    color: #333;
}

.panel-main {
    flex: 1;
    display: flex;
    padding: 12px 0 0 4px;
}

.rail {
    width: 33px;
    flex: none;
    display: flex;
    flex-direction: column;
    gap: 20px;
    border-right: 1px solid #bbb;
}

.rail button {
    width: 30px;
    height: 30px;
}

.on {
    background: #bcc1cd;
}

.props {
    flex: 1;
    display: flex;
    flex-direction: column;
    padding: 0 16px 0 6px;
}

.row {
    display: flex;
    height: 36px;
    padding-left: 17px;
}

.row-main {
    height: 55px;
    padding: 7px 0 0 18px;
    border-bottom: 1px dashed #888;
    align-items: flex-start;
}

.pick {
    width: 74px;
    justify-content: flex-start;
    gap: 5px;
    color: #777;
}

.row-main .pick {
    width: 73px;
}

.props h3 {
    font-size: 13px;
    font-weight: 500;
    line-height: 20px;
    color: #333;
    margin: 26px 0 4px;
}

.row + h3 {
    margin-top: 36px;
}

.row-main + h3 {
    margin-top: 26px;
}

.choice + h3 {
    margin-top: 35px;
}

.icon-a {
    font: bold 16px "Liberation Serif", serif;
    text-anchor: middle;
    fill: #fff;
}

.font-aa {
    width: 32px;
    color: #5a6377;
    font: 22px/28px "Open Sans", sans-serif;
}

.font-aa b {
    font-weight: normal;
    font-size: 32px;
}

.choice {
    display: flex;
    gap: 2px;
    align-self: flex-start;
    margin: 1px 0 0 13px;
    padding: 1px;
    border: 1px solid #e6e6e6;
}

.choice button {
    width: 52px;
    height: 33px;
}

.panel-main .rail {
    width: 35px;
}

.activate {
    margin-top: auto;
    padding: 0 0 20px 20px;
    color: #bbb;
    font-size: 15px;
    line-height: 22px;
}

.act-title {
    font-size: 20px;
    line-height: 26px;
}

/* status bar */
.status {
    position: relative;
    display: flex;
    align-items: center;
    justify-content: space-between;
    height: 29px;
    flex: none;
    padding: 0 14px 0 5px;
    background: #5c6478;
    color: #fff;
}

.status a {
    color: #fff;
}

.zoom {
    display: flex;
    align-items: center;
    gap: 16px;
    padding-top: 2px;
}

.zoom input {
    width: 87px;
    height: 16px;
    margin: 0 -8px;
    appearance: none;
    background: linear-gradient(#e8e8e8, #e8e8e8) center / 100% 2px no-repeat;
}

.zoom input::-webkit-slider-thumb {
    appearance: none;
    width: 6px;
    height: 14px;
    background: #fff;
}

.pct {
    font-size: 10px;
    margin: 0 8px 0 -4px;
}

.z-last {
    margin-left: -2px;
}

.mark {
    position: absolute;
    right: 10px;
    top: 0;
    font: 16px/24px "Liberation Sans", sans-serif;
    color: rgba(255, 255, 255, .65);
    pointer-events: none;
}

.taskbar {
    display: flex;
    height: 2px;
    flex: none;
    background: #d5dbe8;
}

.t1 {
    width: 343px;
    margin-left: 49px;
    background: #fff;
}

.t2 {
    width: 48px;
    margin-left: 266px;
    background: #f4f6fa;
}
```
FILE: script.js
```
// topic: [line y, line end x, [[text, x], ...], [toggle x, ...], [children]]
const topics = [
    [816, 777, [['点击“我的相册”', 680]], [782], [
        [24, 969, [['点击“<”', 807], ['回到个人首页', 895]], [871], []],
        [827, 837, [['相册', 807]], [843], [
            [59, 943, [['照片智能管理', 867]], [947], [
                [47, 1023, [['开启提醒', 972]], [], []],
                [70, 1140, [['点击“×”', 972], ['回到相册页面', 1065]], [1041], []]
            ]],
            [288, 909, [['工具箱', 867]], [914], [
                [116, 993, [['动感影集', 938]], [996], [
                    [93, 1183, [['点击“<”', 1021], ['回到相册页面', 1109]], [1085], []],
                    [116, 1095, [['点击选择模板', 1021]], [], []],
                    [139, 1073, [['滑动查看', 1021]], [], []]
                ]],
                [208, 982, [['个性化', 938]], [985], [
                    [162, 1172, [['点击“<”', 1010], ['回到相册页面', 1098]], [1074], []],
                    [196, 1042, [['我的', 1010]], [1046], [
                        [185, 1244, [['点击“<”', 1070], ['回到个性化页面', 1159]], [1134], []],
                        [208, 1122, [['恢复默认', 1070]], [], []]
                    ]],
                    [231, 1084, [['点击选择皮肤', 1010]], [], []],
                    [254, 1061, [['滑动查看', 1010]], [], []]
                ]],
                [300, 994, [['AR扫一扫', 938]], [997], [
                    [277, 1184, [['点击“<”', 1022], ['回到相册页面', 1110]], [1086], []],
                    [300, 1073, [['镜头反转', 1022]], [], []],
                    [323, 1200, [['点击相册', 1022], ['扫描本地相册图片', 1104]], [1080], []]
                ]],
                [414, 1003, [['老照片修复', 938]], [1008], [
                    [403, 1118, [['点击“。。。”', 1032]], [1123], [
                        [346, 1348, [['点击“×”', 1147], ['回到老照片修复页面', 1241]], [1217], []],
                        [368, 1211, [['添加至标签', 1147]], [], []],
                        [391, 1211, [['添加到我的', 1147]], [], []],
                        [414, 1211, [['添加至桌面', 1147]], [], []],
                        [437, 1211, [['重启小程序', 1147]], [], []],
                        [460, 1178, [['收藏', 1147]], [], []]
                    ]],
                    [483, 1211, [['点击“电源”', 1032], ['回到相册页面', 1136]], [1112], []]
                ]]
            ]],
            [713, 919, [['新建相册', 867]], [925], [
                [506, 1023, [['添加相册名称', 949]], [], []],
                [655, 980, [['权限', 949]], [985], [
                    [541, 1196, [['点击“<”', 1010], ['保留本次编辑吗？', 1098]], [1074, 1200], [
                        [529, 1337, [['保存', 1225], ['新建成功', 1285]], [1261], []],
                        [552, 1348, [['不保存', 1225], ['退出编辑', 1296]], [1272], []]
                    ]],
                    [575, 1122, [['完成', 1010], ['完成编辑', 1070]], [1046], []],
                    [598, 1050, [['所有人', 1010]], [], []],
                    [621, 1051, [['QQ好友', 1010]], [], []],
                    [678, 1085, [['回答问题可见', 1010]], [1090], [
                        [644, 1276, [['点击“<”', 1114], ['回到权限页面', 1203]], [1178], []],
                        [667, 1166, [['点击保存', 1114]], [], []],
                        [690, 1281, [['问题“×”', 1114], ['点击重新编写', 1208]], [1183], []],
                        [713, 1281, [['答案“×”', 1114], ['点击重新编写', 1208]], [1183], []]
                    ]],
                    [736, 1039, [['私密', 1010]], [], []],
                    [759, 1144, [['部分好友', 1010], ['点击选择', 1092]], [1068], []],
                    [782, 1144, [['不给谁看', 1010], ['点击选择', 1092]], [1068], []]
                ]],
                [850, 980, [['主题', 949]], [985], [
                    [805, 1122, [['普通', 1010], ['点击更改', 1070]], [1046], []],
                    [828, 1122, [['多人', 1010], ['点击更改', 1070]], [1046], []],
                    [850, 1122, [['亲子', 1010], ['点击更改', 1070]], [1046], []]
                ]]
            ]]
        ]]
    ]]
];

const map = document.getElementById('map');
const svg = document.createElementNS('http://www.w3.org/2000/svg', 'svg');
svg.setAttribute('class', 'map-lines');
map.appendChild(svg);

function line(d, cls) {
    const p = document.createElementNS('http://www.w3.org/2000/svg', 'path');
    p.setAttribute('d', d);
    if (cls) p.setAttribute('class', cls);
    svg.appendChild(p);
}

function place(el, x, y) {
    el.style.left = x + 'px';
    el.style.top = y + 'px';
    map.appendChild(el);
}

function draw(topic, from) {
    const [y, end, texts, toggles, kids] = topic;
    const start = texts[0][1] - 8;
    line(`M${start} ${y}H${end}`, 'flat');
    if (from) {
        const c = from.x + (start - from.x) * 0.38;
        line(`M${from.x} ${from.y}C${c} ${from.y} ${c} ${y} ${start} ${y}`);
    }
    kids.forEach(k => draw(k, { x: end, y: y }));
    texts.forEach(([text, x]) => {
        const span = document.createElement('span');
        span.className = 'topic';
        span.textContent = text;
        place(span, x, y - 17);
    });
    toggles.forEach(x => {
        const b = document.createElement('button');
        b.className = 'toggle';
        b.setAttribute('aria-label', '折叠');
        place(b, x - 6, y - 14);
    });
}

// trunk and the branches that leave the visible area
line('M657 0L659 860', 'trunk');
line('M657 0C657 430 660 816 672 816');
line('M797 1H858', 'flat');
line('M837 827C842 830 842 840 842 860');
line('M837 827C844 830 843 840 845 860');
line('M919 713C929 714 927 740 928 860');
topics.forEach(t => draw(t));

const fills = ('b30718 d9091f c94f7a e85464 ee6c72 e85f9f e398b8 ef8e88 f29099 ffa17a efaa94 f5bfbc ead6ea ffd3e6 fddfe6 ' +
    '0f2250 22376f 402c76 084a8e 0068a6 3f63ac 5384c5 007dcc 008fd2 2ba8e2 00b3f0 30c8fb 8bc1ea 9fd7ee cdeaf5 ' +
    '00412f 005a34 00625d 5a6b2e 007d49 20953f 00ac9c 51bfc3 1acbb2 47bb7e 00ae57 7fba0f a5d163 c1d843 cce6cb ' +
    'e34f21 ee6700 f18400 f49b57 f2a600 ffae00 fdb935 f9c92f ffda00 fff000 fcf284 fdd46e eacb98 ffdcad fde9d2 ' +
    '7c3172 833e87 6a3f98 77559d 9c68a2 a05a8c cf7bb2 aa93d0 c7a5ca eac1da ' +
    '5d2918 793b30 955029 aa5428 c07840 b5876b ddb585 d5cbc5 cbd5cd ' +
    '000000 3e3a39 595757 717071 898989 9fa0a0 b5b6b6 cacbcb dcdddd eeefef').split(' ');

function swatches(id, list) {
    const box = document.getElementById(id);
    list.forEach(c => {
        const b = document.createElement('button');
        b.style.background = '#' + c;
        b.setAttribute('aria-label', '#' + c);
        box.appendChild(b);
    });
}

swatches('fill', fills);
swatches('recent', ['c7a5ca', '77559d', 'c7a5ca']);
```
